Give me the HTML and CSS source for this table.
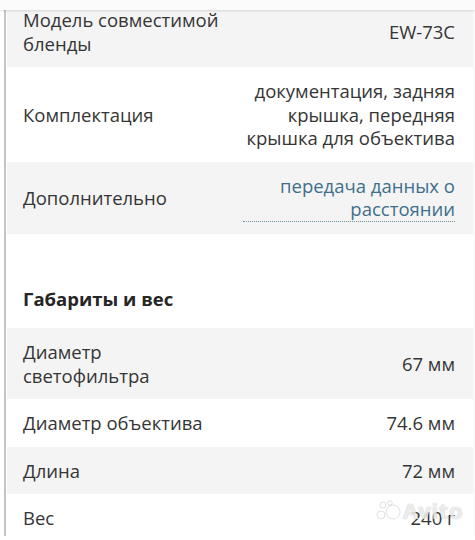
FILE: index.html
```html
<!DOCTYPE html>
<html lang="ru">
<head>
<meta charset="utf-8">
<link rel="stylesheet" href="styles.css">
</head>
<body>
<div class="topbar"></div>
<div class="frame">
  <div class="list">
    <div class="row grey">
      <div class="label">Модель совместимой бленды</div>
      <div class="value">EW-73C</div>
    </div>
    <div class="row">
      <div class="label">Комплектация</div>
      <div class="value">документация, задняя крышка, передняя крышка для объектива</div>
    </div>
    <div class="row grey">
      <div class="label">Дополнительно</div>
      <div class="value"><span class="link">передача данных о расстоянии</span></div>
    </div>
    <div class="section">Габариты и вес</div>
    <div class="row grey">
      <div class="label">Диаметр светофильтра</div>
      <div class="value">67 мм</div>
    </div>
    <div class="row">
      <div class="label">Диаметр объектива</div>
      <div class="value">74.6 мм</div>
    </div>
    <div class="row grey">
      <div class="label">Длина</div>
      <div class="value">72 мм</div>
    </div>
    <div class="row">
      <div class="label">Вес</div>
      <div class="value">240 г</div>
    </div>
  </div>
  <div class="watermark"><svg class="logo" width="26" height="20" viewBox="0 0 26 20"><circle cx="18" cy="12" r="7"/><circle cx="6" cy="15" r="4"/><circle cx="8" cy="5" r="3"/><circle cx="15" cy="3" r="2.3"/></svg><span>Avito</span></div>
</div>
</body>
</html>
```

FILE: styles.css
```css
html, body {
  margin: 0;
  padding: 0;
  background: #fff;
  overflow: hidden;
}
body {
  font-family: "Open Sans", "Noto Sans", sans-serif;
  font-size: 18.5px;
  line-height: 23.5px;
  color: #353535;
  width: 475px;
  height: 540px;
}
.topbar {
  position: fixed;
  top: 0;
  left: 0;
  right: 0;
  height: 10px;
  background: #fbfbfb;
  box-shadow: 0 1px 2px rgba(0,0,0,0.12);
  z-index: 2;
}
.frame {
  position: relative;
  margin-left: 4px;
  border-left: 2px solid #c4c4c4;
  padding-left: 1px;
  width: 466px;
  height: 540px;
  border-right: 2px solid #fafafa;
}
.list {
  margin-top: -4px;
}
.row {
  display: grid;
  grid-template-columns: 205px 1fr;
  column-gap: 15px;
  align-items: center;
  padding: 12px 18px 12px 16px;
  background: #fff;
}
.row.grey {
  background: #f4f4f4;
}
.value {
  text-align: right;
}
.link {
  display: inline-block;
  color: #3d6f8c;
  border-bottom: 1px dotted #6f8fa3;
  width: 100%;
}
.section {
  padding: 53px 16px 18px;
  font-weight: 700;
  color: #262626;
  background: #fff;
}
.watermark {
  position: absolute;
  right: 10px;
  bottom: 14px;
  display: flex;
  align-items: center;
  gap: 2px;
  font-size: 22px;
  line-height: 24px;
  font-weight: 700;
  color: rgba(255,255,255,0.8);
  text-shadow: 0 0 1px rgba(0,0,0,0.35);
  letter-spacing: 0.5px;
}
.logo circle {
  fill: rgba(255,255,255,0.8);
  stroke: rgba(0,0,0,0.15);
  stroke-width: 0.8;
}
```
